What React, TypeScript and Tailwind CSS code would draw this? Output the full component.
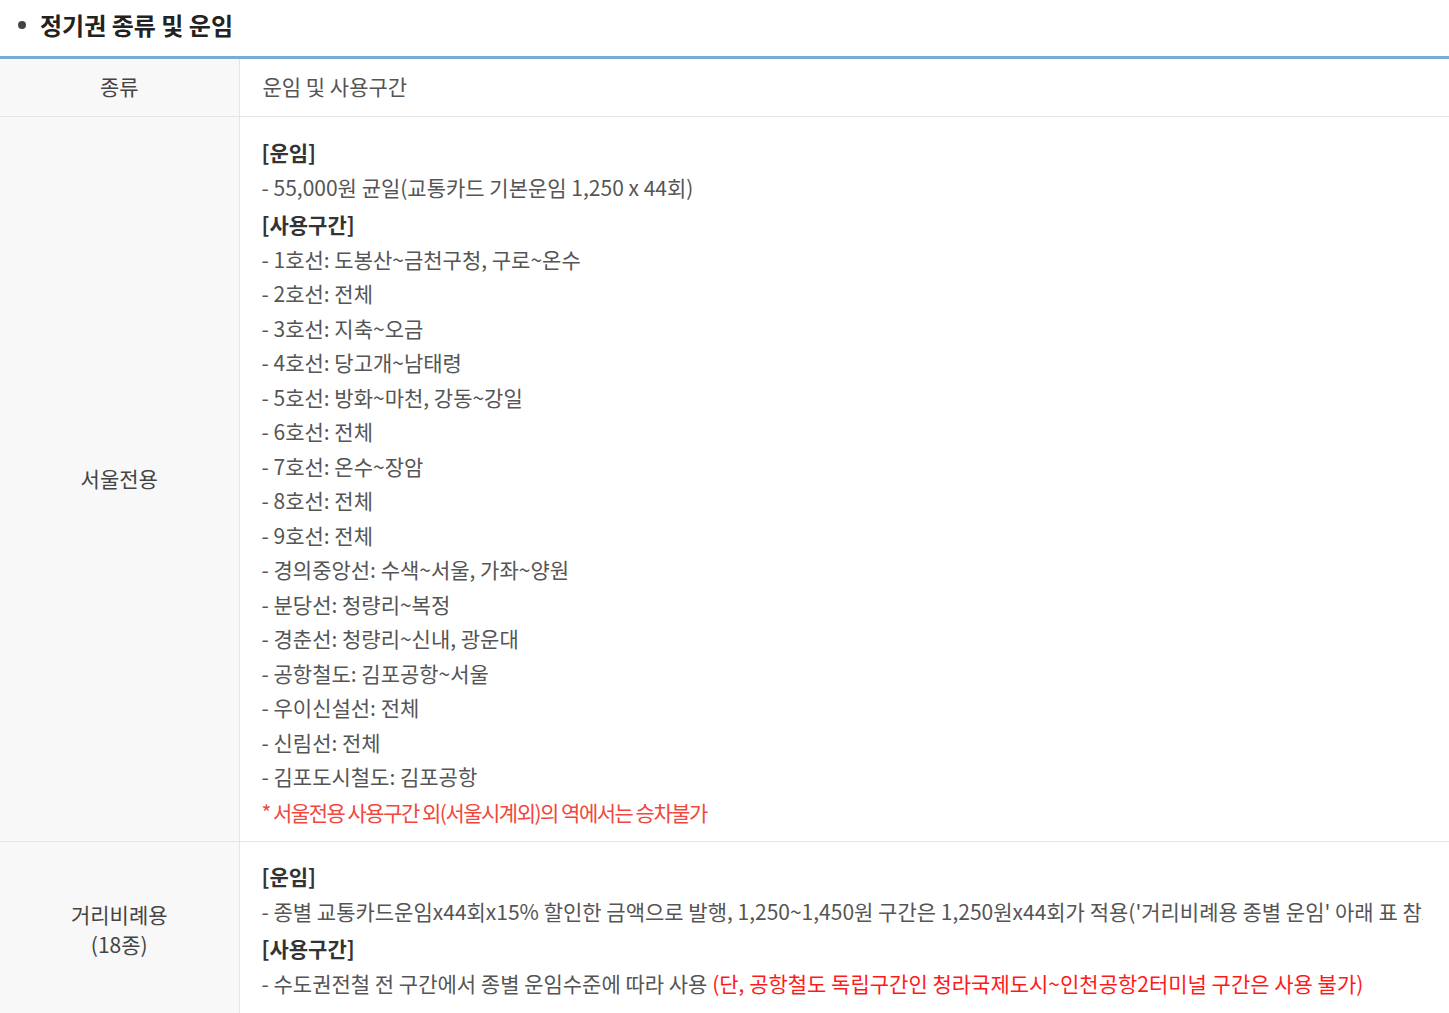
const seoulLines = [
  "1호선: 도봉산~금천구청, 구로~온수",
  "2호선: 전체",
  "3호선: 지축~오금",
  "4호선: 당고개~남태령",
  "5호선: 방화~마천, 강동~강일",
  "6호선: 전체",
  "7호선: 온수~장암",
  "8호선: 전체",
  "9호선: 전체",
  "경의중앙선: 수색~서울, 가좌~양원",
  "분당선: 청량리~복정",
  "경춘선: 청량리~신내, 광운대",
  "공항철도: 김포공항~서울",
  "우이신설선: 전체",
  "신림선: 전체",
  "김포도시철도: 김포공항",
];

function Heading({ children }: { children: React.ReactNode }) {
  return (
    <p className="mt-[3px] first:mt-0 font-bold text-[#333]">{children}</p>
  );
}

function Line({ children }: { children: React.ReactNode }) {
  return <p className="whitespace-nowrap">- {children}</p>;
}

export default function App() {
  return (
    <div
      className="w-full overflow-hidden bg-white"
      style={{ fontFamily: '"Noto Sans CJK KR", "Noto Sans", sans-serif' }}
    >
      {/* Title */}
      <div className="flex items-center h-[56px] pl-[18px] pb-[7px]">
        <span className="w-[8px] h-[8px] rounded-full bg-[#444] mr-[14px]" />
        <h2 className="text-[24px] font-bold text-[#222]">
          정기권 종류 및 운임
        </h2>
      </div>

      <table className="w-full border-collapse border-t-[3px] border-[#7aaad6] text-[21px] text-[#555]">
        <colgroup>
          <col className="w-[239px]" />
          <col />
        </colgroup>
        <thead>
          <tr className="h-[59px] border-b border-[#e5e5e5]">
            <th className="bg-[#f8f8f8] font-normal text-[#444] border-r border-[#e5e5e5] text-center pb-[2px]">
              종류
            </th>
            <th className="font-normal text-[#555] text-left pl-[23px] pb-[2px]">
              운임 및 사용구간
            </th>
          </tr>
        </thead>
        <tbody>
          <tr className="border-b border-[#e5e5e5]">
            <td className="bg-[#f8f8f8] text-[#444] border-r border-[#e5e5e5] text-center align-middle">
              서울전용
            </td>
            <td className="pl-[22px] pt-[18px] pb-[12px] leading-[34.5px] align-top">
              <Heading>[운임]</Heading>
              <Line>55,000원 균일(교통카드 기본운임 1,250 x 44회)</Line>
              <Heading>[사용구간]</Heading>
              {seoulLines.map((l) => (
                <Line key={l}>{l}</Line>
              ))}
              <p className="mt-[1px] text-[#f0483e] tracking-[-1.5px]">
                * 서울전용 사용구간 외(서울시계외)의 역에서는 승차불가
              </p>
            </td>
          </tr>
          <tr>
            <td className="bg-[#f8f8f8] text-[#444] border-r border-[#e5e5e5] text-center align-middle leading-[30px]">
              거리비례용
              <br />
              (18종)
            </td>
            <td className="pl-[22px] pt-[17px] pb-[16px] leading-[34.5px] align-top">
              <Heading>[운임]</Heading>
              <div className="w-[1161px] overflow-hidden">
                <Line>
                  종별 교통카드운임x44회x15% 할인한 금액으로 발행,
                  1,250~1,450원 구간은 1,250원x44회가 적용('거리비례용 종별
                  운임' 아래 표 참조)
                </Line>
              </div>
              <Heading>[사용구간]</Heading>
              <Line>
                수도권전철 전 구간에서 종별 운임수준에 따라 사용{" "}
                <span className="text-[#ff1a1a]">
                  (단, 공항철도 독립구간인 청라국제도시~인천공항2터미널 구간은
                  사용 불가)
                </span>
              </Line>
            </td>
          </tr>
        </tbody>
      </table>
    </div>
  );
}
